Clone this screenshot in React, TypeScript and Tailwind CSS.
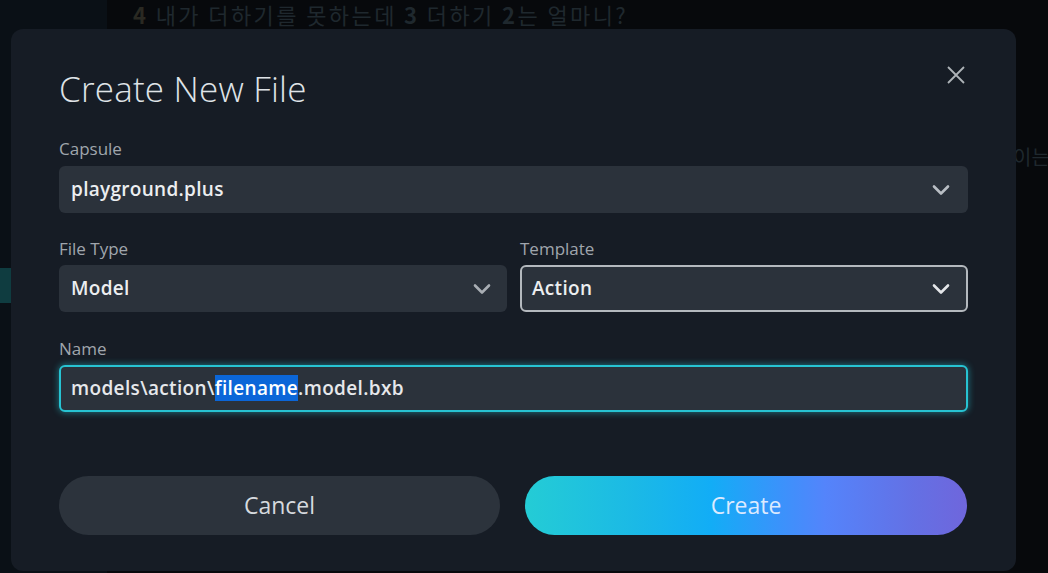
import React from "react";

const Chevron = ({ className = "" }: { className?: string }) => (
  <svg width="18" height="12" viewBox="0 0 18 12" className={className} fill="none">
    <path d="M2 2.5 L9 9.5 L16 2.5" stroke="currentColor" strokeWidth="2.6" strokeLinecap="round" strokeLinejoin="round" />
  </svg>
);

export default function App() {
  const font = { fontFamily: '"Open Sans", "Noto Sans", "Noto Sans CJK KR", sans-serif' };
  return (
    <div className="relative w-[1048px] h-[573px] overflow-hidden bg-[#07090c]" style={font}>
      {/* background app */}
      <div className="absolute inset-0 flex">
        <div className="w-[107px] h-full bg-[#0a1016] flex flex-col">
          <div className="mt-[268px] w-[11px] h-[35px] bg-[#0f3c40]" />
        </div>
        <div className="flex-1 h-full bg-[#07090c]" />
      </div>
      <div className="absolute left-[133px] top-[2px] text-[22px] leading-[24px] text-[#1f282e] tracking-[2.4px] whitespace-nowrap" style={{ fontFamily: '"Noto Sans CJK KR", "Noto Sans", sans-serif' }}>
        <span className="text-[#2a2922] font-bold">4</span> 내가 더하기를 못하는데 <span className="font-bold">3</span> 더하기 <span className="font-bold">2</span>는 얼마니?
      </div>
      <div className="absolute left-[1013px] top-[142px] text-[20px] text-[#1f282e] whitespace-nowrap" style={{ fontFamily: '"Noto Sans CJK KR", sans-serif' }}>
        이는
      </div>

      {/* modal */}
      <div className="absolute left-[11px] top-[29px] w-[1005px] h-[542px] rounded-[12px] bg-[#161c25] px-[48px] pt-[38px]">
        <button className="absolute right-[50px] top-[36px] text-[#aeb3b8]">
          <svg width="20" height="20" viewBox="0 0 20 20" fill="none">
            <path d="M2 2 L18 18 M18 2 L2 18" stroke="currentColor" strokeWidth="1.8" />
          </svg>
        </button>

        <h1 className="text-[35px] font-light text-[#dfe3e7] leading-[44px] tracking-[0.2px]">Create New File</h1>

        <div className="mt-[27px]">
          <div className="text-[17px] font-medium text-[#a0a6ad] leading-[22px]">Capsule</div>
          <div className="mt-[6px] h-[47px] rounded-[6px] bg-[#2b323b] flex items-center justify-between pl-[12px] pr-[18px]">
            <span className="text-[19px] font-semibold text-[#eceef0] tracking-[0.3px]">playground.plus</span>
            <Chevron className="text-[#b9bec4]" />
          </div>
        </div>

        <div className="mt-[25px] grid grid-cols-2 gap-[13px]">
          <div>
            <div className="text-[17px] font-medium text-[#a0a6ad] leading-[22px]">File Type</div>
            <div className="mt-[5px] h-[47px] rounded-[6px] bg-[#2b323b] flex items-center justify-between pl-[12px] pr-[16px]">
              <span className="text-[19px] font-semibold text-[#eceef0] tracking-[0.3px]">Model</span>
              <Chevron className="text-[#a9aeb4]" />
            </div>
          </div>
          <div>
            <div className="text-[17px] font-medium text-[#a0a6ad] leading-[22px]">Template</div>
            <div className="mt-[5px] h-[47px] rounded-[6px] bg-[#2b323b] border-2 border-[#b4b9be] flex items-center justify-between pl-[10px] pr-[16px]">
              <span className="text-[19px] font-semibold text-[#eceef0] tracking-[0.3px]">Action</span>
              <Chevron className="text-[#e4e6e9]" />
            </div>
          </div>
        </div>

        <div className="mt-[26px]">
          <div className="text-[17px] font-medium text-[#a0a6ad] leading-[22px]">Name</div>
          <div className="mt-[5px] h-[47px] rounded-[6px] bg-[#2b323b] border-2 border-[#27c3d2] shadow-[0_0_6px_1px_rgba(39,195,210,0.45)] flex items-center pl-[10px]">
            <span className="text-[19px] font-semibold text-[#e6e8eb] tracking-[0.35px] whitespace-pre">
              models\action\<span className="bg-[#0b66d8] text-white inline-block leading-[26px]">filename</span>.model.bxb
            </span>
          </div>
        </div>

        <div className="mt-[64px] flex gap-[25px]">
          <button className="w-[441px] h-[59px] rounded-full bg-[#2c333c] text-[23px] text-[#d6dade]">Cancel</button>
          <button className="w-[442px] h-[59px] rounded-full text-[23px] text-[#dceaff] bg-[linear-gradient(90deg,#24ccd5_0%,#1bb9e6_25%,#12adf6_42%,#3b92fb_58%,#5484fb_68%,#6470e4_88%,#6f66dc_100%)]">
            Create
          </button>
        </div>
      </div>
    </div>
  );
}
